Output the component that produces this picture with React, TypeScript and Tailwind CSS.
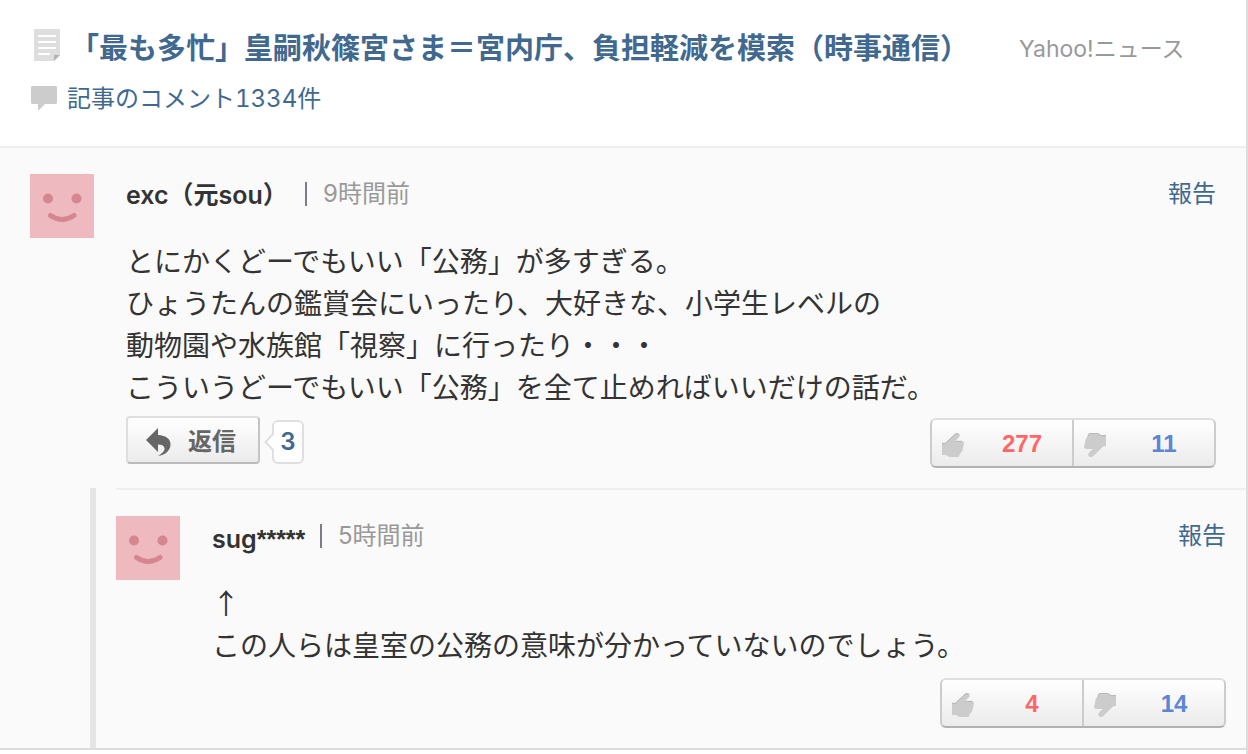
import type { ReactNode } from 'react';

const sans = "font-['Inter','Noto_Sans_CJK_JP',sans-serif]";

function ArticleIcon() {
  return (
    <svg width="26" height="32" viewBox="0 0 26 32" aria-hidden="true" className="shrink-0">
      <path d="M0 0H26V26L20 32H0Z" fill="#dedede" />
      <path d="M4 6H22V8H4ZM4 12H22V14H4ZM4 18H22V20H4ZM4 24H16V26H4Z" fill="#fff" />
      <path d="M20 26H26L20 32Z" fill="#b3b3b3" />
    </svg>
  );
}

function CommentIcon() {
  return (
    <svg width="26" height="24" viewBox="0 0 26 24" aria-hidden="true" className="shrink-0">
      <path d="M1 0H25L26 1V17L25 18H14L8 24H7V18H1L0 17V1Z" fill="#ccc" />
    </svg>
  );
}

function Avatar() {
  return (
    <svg width="64" height="64" viewBox="0 0 64 64" aria-hidden="true" className="shrink-0">
      <rect width="64" height="64" fill="#eebac0" />
      <circle cx="18" cy="24.500" r="5" fill="#d5868f" />
      <circle cx="46.500" cy="24.500" r="5" fill="#d5868f" />
      <path d="M20.500 41.500Q32 49.500 44 41.500" fill="none" stroke="#d5868f" strokeWidth="5" strokeLinecap="round" />
    </svg>
  );
}

function ReplyArrow() {
  return (
    <svg width="25" height="28" viewBox="0 0 25 28" aria-hidden="true" className="shrink-0">
      <path d="M0 12L12 0V7C20 7.500 25 11 24.500 17C24 23 19 27 12 28C17 25 19 22.500 18.500 20C18 17.500 15.500 16.500 12 16.500V24Z" fill="#666" />
    </svg>
  );
}

function ThumbUp() {
  return (
    <svg width="22" height="24" viewBox="0 0 66 72" aria-hidden="true">
      <path d="M0 30H10L38 3Q43 -1 49 1Q56 5 52 12L40 24H60Q66 25 66 31L61 53Q59 58 55 61L50 72H22L12 66H0Z" fill="#ccc" />
      <path d="M0 31H10L39 4Q45 0 50 3M40 25H60" fill="none" stroke="#b5b5b5" strokeWidth="3" />
    </svg>
  );
}

function ThumbDown() {
  return (
    <svg width="22" height="24" viewBox="0 0 66 72" aria-hidden="true">
      <path d="M66 40H58L28 69Q23 73 17 71Q10 67 14 60L26 48H6Q0 47 0 41L5 19Q7 14 11 11L16 0H41L51 7H66Z" fill="#ccc" />
      <path d="M11 11L16 1H41L51 8H66" fill="none" stroke="#b5b5b5" strokeWidth="3" />
    </svg>
  );
}

function Votes({ up, down }: { up: number; down: number }) {
  return (
    <div className="flex h-[50px] w-[286px] rounded-md border-2 border-t-[#dfdfdf] border-x-[#ccc] border-b-[#b2b2b2] bg-linear-to-b from-white to-[#ebebeb] font-['Liberation_Sans',sans-serif] text-2xl font-bold">
      <button type="button" aria-label={`そう思う ${up}`} className="flex flex-1 items-center pl-2.5 pt-1">
        <ThumbUp />
        <span className="flex-1 pb-0.5 pl-2 text-center text-[#ff6668]">{up}</span>
      </button>
      <button type="button" aria-label={`そう思わない ${down}`} className="flex flex-1 items-center border-l-2 border-[#ccc] pl-2.5 pt-1">
        <ThumbDown />
        <span className="flex-1 pb-0.5 pl-2 text-center text-[#5c85d6]">{down}</span>
      </button>
    </div>
  );
}

type CommentProps = {
  name: string;
  mask?: string;
  nameClass: string;
  time: string;
  lines: string[];
  className: string;
  children: ReactNode;
};

function Comment({ name, mask, nameClass, time, lines, className, children }: CommentProps) {
  return (
    <article className={`flex gap-8 ${className}`}>
      <Avatar />
      <div className="min-w-0 flex-1">
        <header className="flex h-10 items-center">
          <h2 className={`text-[25px] font-semibold text-[#333] ${nameClass}`}>
            {name}
            {mask && <span className="font-['Liberation_Sans',sans-serif] font-bold">{mask}</span>}
          </h2>
          <span className="h-6 w-0.5 bg-[#7c7c86]" />
          <time className="pl-4 text-2xl text-[#999]">{time}</time>
          <a href="#report" className="ml-auto text-2xl text-[#41698f]">報告</a>
        </header>
        <p className="mt-[25px] font-['Noto_Sans_CJK_JP',sans-serif] text-[28px] leading-[42px] text-[#333]">
          {lines.map((line) => (
            <span key={line} className="block">{line}</span>
          ))}
        </p>
        {children}
      </div>
    </article>
  );
}

export default function App() {
  return (
    <main className={`min-h-screen border-r-2 border-[#ddd] bg-white ${sans}`} lang="ja">
      <header className="border-b-2 border-[#eee] pb-[30px] pl-[31px] pt-[26px]">
        <div className="flex items-start gap-2.5 pl-[3px]">
          <div className="pt-[3px]">
            <ArticleIcon />
          </div>
          <h1 className="pt-0.5 text-[29px] leading-[42px] font-bold text-[#41698f]">
            <a href="#article">「最も多忙」皇嗣秋篠宮さま＝宮内庁、負担軽減を模索（時事通信）</a>
          </h1>
          <span className="ml-10 pt-0.5 text-[23px] leading-[42px] text-[#999]">Yahoo!ニュース</span>
        </div>
        <a href="#comments" className="mt-2.5 flex h-9 items-center gap-2.5 text-2xl text-[#41698f] tabular-nums">
          <CommentIcon />
          <span className="pt-0.5">記事のコメント1334件</span>
        </a>
      </header>

      <section className="border-b-2 border-[#ddd] bg-[#fafafa]">
        <Comment
          name="exc（元sou）"
          nameClass="w-[179px] pt-1"
          time="9時間前"
          className="px-[30px] pb-5 pt-[26px]"
          lines={[
            'とにかくどーでもいい「公務」が多すぎる。',
            'ひょうたんの鑑賞会にいったり、大好きな、小学生レベルの',
            '動物園や水族館「視察」に行ったり・・・',
            'こういうどーでもいい「公務」を全て止めればいいだけの話だ。',
          ]}
        >
          <div className="mt-[9px] flex items-start">
            <button
              type="button"
              className="flex h-12 w-[134px] items-center gap-[17px] rounded-sm border-2 border-t-[#dfdfdf] border-l-[#dfdfdf] border-r-[#c4c4c4] border-b-[#bbb] bg-linear-to-b from-white to-[#ebebeb] pl-[18px] pt-[3px] text-2xl font-bold text-[#666]"
            >
              <ReplyArrow />
              返信
            </button>
            <a
              href="#replies"
              className="relative ml-3 mt-1 flex h-11 w-8 items-center justify-center rounded-md border-2 border-[#dfdfdf] bg-white text-2xl font-semibold text-[#41698f]"
            >
              <svg width="10" height="20" viewBox="0 0 10 20" aria-hidden="true" className="absolute -left-2.5 top-2.5">
                <path d="M10 1L1.500 10L10 19" fill="#fff" stroke="#dfdfdf" strokeWidth="2" />
              </svg>
              3
            </a>
            <div className="ml-auto mt-0.5">
              <Votes up={277} down={11} />
            </div>
          </div>
        </Comment>

        <div className="ml-[90px] border-l-[6px] border-[#e5e5e5] pl-5">
          <Comment
            name="sug"
            mask="*****"
            nameClass="w-[108px] pt-2"
            time="5時間前"
            className="border-t-2 border-[#eee] pb-5 pr-5 pt-[26px]"
            lines={['↑', 'この人らは皇室の公務の意味が分かっていないのでしょう。']}
          >
            <div className="mt-[13px] flex justify-end">
              <Votes up={4} down={14} />
            </div>
          </Comment>
        </div>
      </section>
    </main>
  );
}
